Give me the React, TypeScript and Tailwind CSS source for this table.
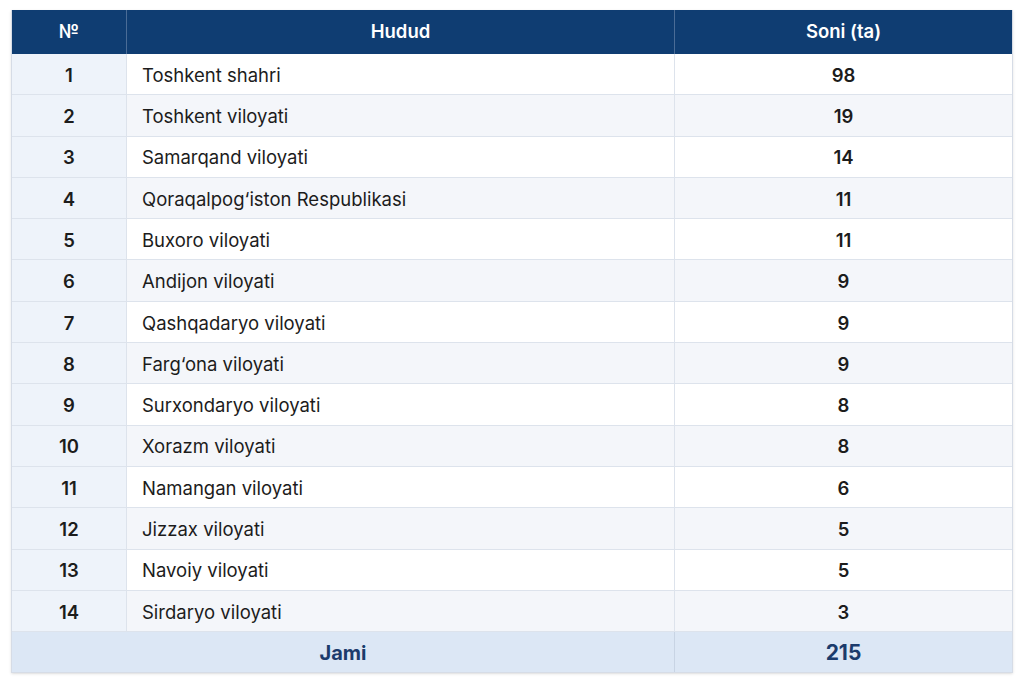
import React from 'react';

const rows: [number, string, number][] = [
  [1, 'Toshkent shahri', 98],
  [2, 'Toshkent viloyati', 19],
  [3, 'Samarqand viloyati', 14],
  [4, 'Qoraqalpog‘iston Respublikasi', 11],
  [5, 'Buxoro viloyati', 11],
  [6, 'Andijon viloyati', 9],
  [7, 'Qashqadaryo viloyati', 9],
  [8, 'Farg‘ona viloyati', 9],
  [9, 'Surxondaryo viloyati', 8],
  [10, 'Xorazm viloyati', 8],
  [11, 'Namangan viloyati', 6],
  [12, 'Jizzax viloyati', 5],
  [13, 'Navoiy viloyati', 5],
  [14, 'Sirdaryo viloyati', 3],
];

export default function App() {
  return (
    <div className="w-[1024px] h-[682px] bg-white pt-[10px] pl-[11px] font-['Inter',sans-serif] text-[#1c1c1c]">
      <div className="w-[1002px] border border-[#d6dce6] border-t-0 shadow-sm">
        <div className="grid grid-cols-[115px_548px_1fr] h-[44px] bg-[#0f3d72] text-white font-semibold text-[18.5px]">
          <div className="flex items-center justify-center border-r border-[#4a6c96]">№</div>
          <div className="flex items-center justify-center border-r border-[#4a6c96]">Hudud</div>
          <div className="flex items-center justify-center">Soni (ta)</div>
        </div>

        {rows.map(([n, name, count]) => {
          const even = n % 2 === 0;
          return (
            <div
              key={n}
              className={`grid grid-cols-[115px_548px_1fr] h-[41.3px] border-b border-[#dde3ec] text-[18.5px] ${even ? 'bg-[#f4f6fa]' : 'bg-white'}`}
            >
              <div className="flex items-center justify-center pt-[3px] bg-[#eef3fa] border-r border-[#dde3ec] font-semibold">
                {n}
              </div>
              <div className="flex items-center pl-[15px] pt-[3px] border-r border-[#dde3ec]">{name}</div>
              <div className="flex items-center justify-center pt-[3px] font-semibold">{count}</div>
            </div>
          );
        })}

        <div className="grid grid-cols-[663px_1fr] h-[40px] bg-[#dce7f5] text-[#1b3b6c] font-bold text-[20px]">
          <div className="flex items-center justify-center pt-[1px] border-r border-[#c8d4e4]">Jami</div>
          <div className="flex items-center justify-center pt-[1px] text-[21px]">215</div>
        </div>
      </div>
    </div>
  );
}
